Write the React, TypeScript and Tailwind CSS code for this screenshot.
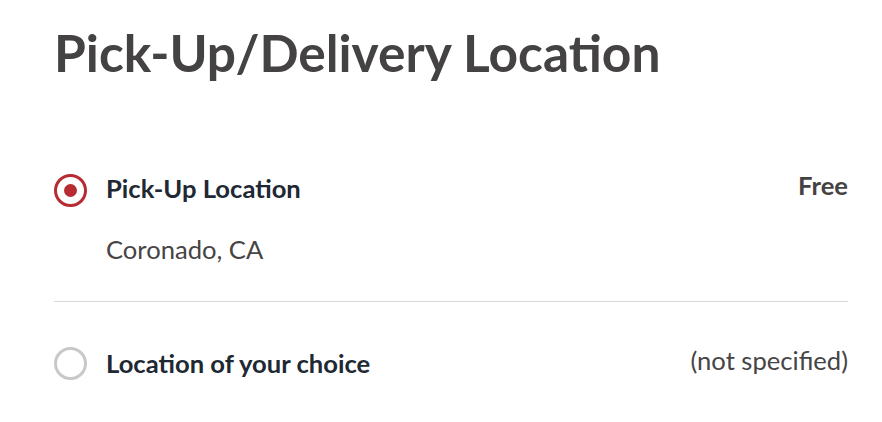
export default function App() {
  return (
    <div className="w-[882px] h-[422px] bg-white pl-[54px] pt-[20px]" style={{ fontFamily: "Lato, 'Open Sans', sans-serif" }}>
      <h1 className="text-[51.5px] leading-[64px] font-bold text-[#444242]">Pick-Up/Delivery Location</h1>
      <div className="mt-[88px] w-[794px]">
        <div className="flex items-start justify-between pb-[36px] border-b border-[#d9d9d9]">
          <div className="flex items-start">
            <div className="w-[33px] h-[33px] mt-[2px] rounded-full border-[3px] border-[#b72b33] flex items-center justify-center">
              <div className="w-[13px] h-[13px] rounded-full bg-[#b72b33]" />
            </div>
            <div className="ml-[19px]">
              <div className="text-[25.6px] leading-[32px] font-bold text-[#202833]">Pick-Up Location</div>
              <div className="mt-[29px] text-[25.6px] leading-[32px] text-[#464444]">Coronado, CA</div>
            </div>
          </div>
          <div className="text-[25.6px] leading-[26px] font-bold text-[#444242]">Free</div>
        </div>
        <div className="flex items-start justify-between pt-[45px]">
          <div className="flex items-start">
            <div className="w-[33px] h-[33px] mt-[0px] rounded-full border-[3px] border-[#c8c8c8]" />
            <div className="ml-[19px] text-[25.6px] leading-[32px] font-bold text-[#202833]">Location of your choice</div>
          </div>
          <div className="text-[25.6px] leading-[26px] text-[#464444]">(not specified)</div>
        </div>
      </div>
    </div>
  );
}
